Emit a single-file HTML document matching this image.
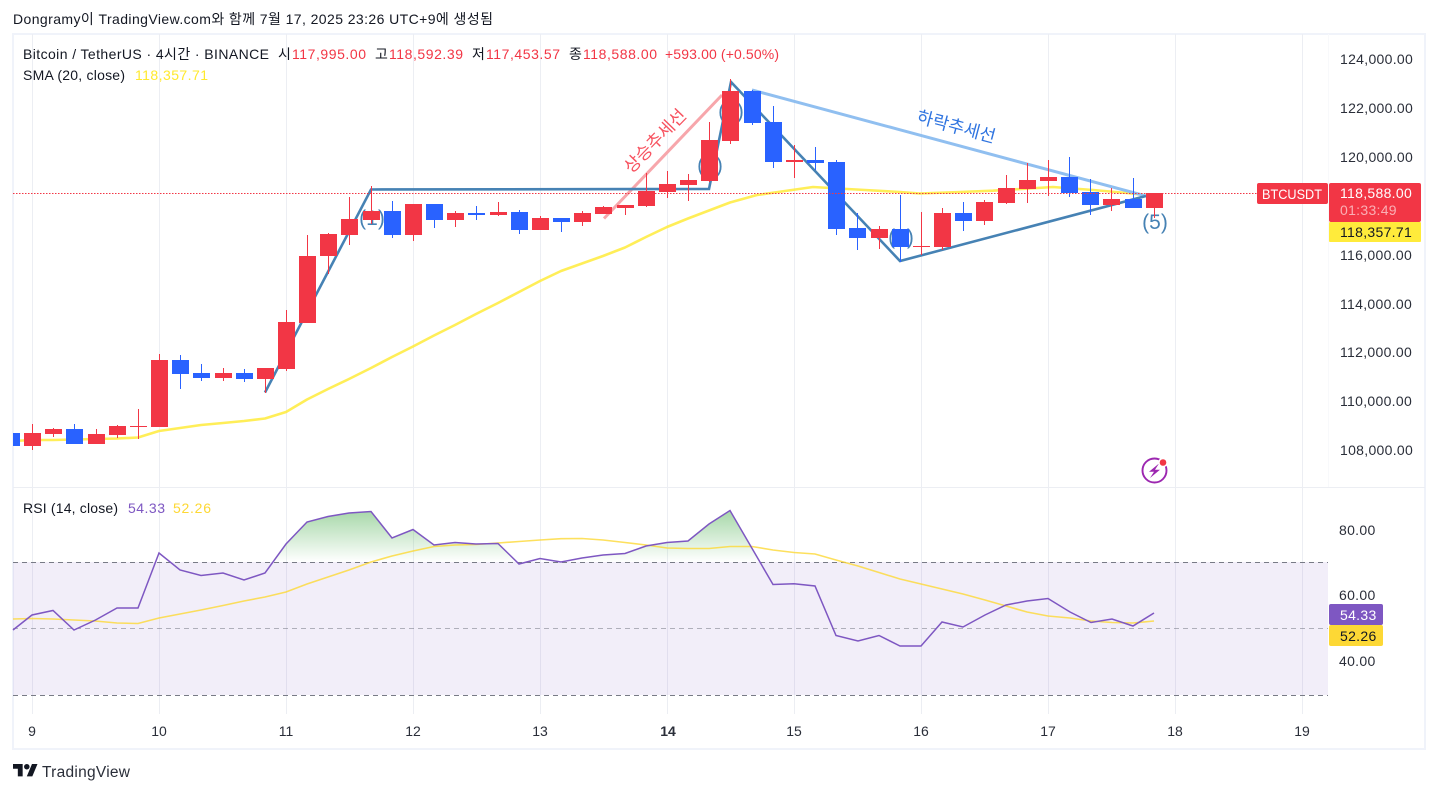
<!DOCTYPE html>
<html><head><meta charset="utf-8"><style>
html,body{margin:0;padding:0;background:#fff;width:1438px;height:793px;overflow:hidden}
svg{display:block}
text{font-family:"Liberation Sans","Noto Sans CJK KR",sans-serif;font-size:14px;fill:#131722}
.r{fill:#f23645}
.a{fill:#2a2e39;letter-spacing:.3px}
.t{text-anchor:middle;fill:#2a2e39}
.w{font-size:21px;fill:#4682b4;text-anchor:middle}
</style></head><body>
<svg width="1438" height="793" viewBox="0 0 1438 793" xmlns="http://www.w3.org/2000/svg">
<defs>
<linearGradient id="g" gradientUnits="userSpaceOnUse" x1="0" y1="510" x2="0" y2="562"><stop offset="0" stop-color="#4caf50" stop-opacity=".5"/><stop offset="1" stop-color="#4caf50" stop-opacity="0"/></linearGradient>
<clipPath id="c"><rect x="13" y="500" width="1315" height="62"/></clipPath>
<clipPath id="p"><rect x="13" y="34" width="1315" height="680"/></clipPath>
</defs>
<text x="13" y="24" textLength="480" style="font-size:14px">Dongramy이 TradingView.com와 함께 7월 17, 2025 23:26 UTC+9에 생성됨</text>
<rect x="13" y="34" width="1412" height="715" fill="#fff" stroke="#f0f3fa" stroke-width="2"/>
<path d="M32.5 34V714M159.5 34V714M286.5 34V714M413.5 34V714M540.5 34V714M667.5 34V714M794.5 34V714M921.5 34V714M1048.5 34V714M1175.5 34V714M1302.5 34V714" stroke="#eceef3" stroke-width="1"/>
<path d="M13 487.5H1425" stroke="#eceef3" stroke-width="1"/>
<path d="M1328.5 34V487" stroke="#f8f9fb" stroke-width="1"/>

<!-- RSI pane -->
<rect x="13" y="562" width="1315" height="133" fill="#7e57c2" fill-opacity=".1"/>
<path d="M13 562.5H1328M13 695.5H1328" stroke="#787b86" stroke-dasharray="5 4"/>
<path d="M13 628.5H1328" stroke="#787b86" stroke-opacity=".55" stroke-dasharray="5 4"/>
<polygon clip-path="url(#c)" fill="url(#g)" points="13,700 13,630 265,573 286,544 307,522 328,516.5 349,513 371,511.5 392,538 413,529.5 434,545 455,542.5 476,544 498,543.5 519,564 540,558.5 561,562 582,558 603,555 625,553.5 646,546 667,542.5 688,541 709,524 730,510.5 773,584.5 773,700"/>
<polyline fill="none" stroke="#fdd835" stroke-opacity=".8" stroke-width="1.6" points="13,619 32,618.5 53,619 74,620 95,621 117,623 138,623.5 159,618 180,614 201,610 223,605.5 244,601 265,597 286,592 307,584 328,577 349,570 371,562 392,556 413,551 434,546.5 455,545 476,544.5 498,543 519,541.5 540,540 561,538.7 582,538.5 603,540 625,542.5 646,545 667,548 688,548.5 709,548.5 730,546.5 752,546.5 773,550 794,552.5 815,554 836,560 858,566 879,572.5 900,579 921,584 942,589 963,594 985,600 1006,606 1027,612 1048,616 1070,618 1091,621 1112,622.5 1133,623 1154,621"/>
<polyline fill="none" stroke="#7e57c2" stroke-width="1.5" points="13,630 32,615 53,610.5 74,630 95.5,620 117,608 138,608 159,553 180,570 201,575.5 223,573 244,580 265,573 286,544 307,522 328,516.5 349,513 371,511.5 392,538 413,529.5 434,545 455,542.5 476,544 498,543.5 519,564 540,558.5 561,562 582,558 603,555 625,553.5 646,546 667,542.5 688,541 709,524 730,510.5 773,584.5 794,583.7 815,586 836,635.5 858,641 879,635.5 900,646 921,646 942,622 963,627 985,615 1006,605 1027,601 1048,598.5 1070,612 1091,622.5 1112,619 1133,626 1154,613"/>

<!-- SMA + drawings beneath candles -->
<g clip-path="url(#p)">
<polyline fill="none" stroke="#ffeb3b" stroke-opacity=".85" stroke-width="2.6" stroke-linejoin="round" points="13,441 32,440 53,440 74,439.5 95,439 117,438.5 138,437.5 159,431 180,428 201,425 223,423 244,421 265,418.5 286,412 307,399.5 328,389 349,379 371,368 392,357 413,346.5 434,335.5 455,325 476,314 498,303 519,292 540,281 561,271 582,263.5 603,256 625,247.5 646,237 667,227 688,218.5 709,210.5 730,202.5 757,195 785,191 813,187 830,188 865,190 900,192 920,193.5 960,192 993,190.7 1053,187 1093,190 1127,193 1145,195"/>
</g>
<path d="M604 218.5L722 95" stroke="#f7a6ab" stroke-width="3" fill="none"/>
<path d="M752 90L1146 196" stroke="#90bff0" stroke-width="3" fill="none"/>
<polyline fill="none" stroke="#4682b4" stroke-width="2.6" stroke-linejoin="miter" points="265,392.5 371,189.5 709,189 731,82 900,261 1146,196"/>
<text class="w" x="372" y="225">(1)</text>
<text class="w" x="710" y="172">(2)</text>
<text class="w" x="731" y="118">(3)</text>
<text class="w" x="901" y="244">(4)</text>
<text class="w" x="1155" y="229">(5)</text>
<text transform="translate(656 142) rotate(-46)" text-anchor="middle" dominant-baseline="middle" style="font-size:17.5px;fill:#f7525f">상승추세선</text>
<text transform="translate(956 128) rotate(15)" text-anchor="middle" dominant-baseline="middle" style="font-size:17.5px;fill:#2f74e0">하락추세선</text>

<!-- candles -->
<g shape-rendering="crispEdges">
<path fill="#f23645" d="M32 424h1v26h-1zM53 428h1v9h-1zM96 429h1v15h-1zM117 425h1v13h-1zM138 409h1v30h-1zM159 354h1v73h-1zM223 368h1v13h-1zM265 368h1v25h-1zM286 310h1v61h-1zM307 235h1v88h-1zM328 233h1v41h-1zM349 197h1v48h-1zM371 186h1v38h-1zM413 204h1v37h-1zM455 211h1v16h-1zM498 202h1v14h-1zM540 216h1v14h-1zM582 211h1v15h-1zM603 206h1v8h-1zM625 205h1v10h-1zM646 173h1v34h-1zM667 171h1v27h-1zM688 174h1v27h-1zM709 122h1v60h-1zM730 79h1v65h-1zM794 145h1v33h-1zM879 226h1v23h-1zM921 212h1v43h-1zM942 208h1v42h-1zM984 200h1v25h-1zM1006 175h1v29h-1zM1027 163h1v40h-1zM1048 160h1v36h-1zM1111 188h1v23h-1zM1154 193h1v25h-1z"/>
<path fill="#f23645" d="M24 433h17v13h-17zM45 429h17v5h-17zM88 434h17v10h-17zM109 426h17v9h-17zM130 426h17v1h-17zM151 360h17v67h-17zM215 373h17v5h-17zM257 368h17v11h-17zM278 322h17v47h-17zM299 256h17v67h-17zM320 234h17v22h-17zM341 219h17v16h-17zM363 211h17v9h-17zM405 204h17v31h-17zM447 213h17v7h-17zM490 212h17v3h-17zM532 218h17v12h-17zM574 213h17v9h-17zM595 207h17v7h-17zM617 205h17v3h-17zM638 191h17v15h-17zM659 184h17v8h-17zM680 180h17v5h-17zM701 140h17v41h-17zM722 91h17v50h-17zM786 160h17v2h-17zM871 229h17v9h-17zM913 246h17v1h-17zM934 213h17v34h-17zM976 202h17v19h-17zM998 188h17v15h-17zM1019 180h17v9h-17zM1040 177h17v4h-17zM1103 199h17v6h-17zM1146 193h17v15h-17z"/>
<path fill="#2962ff" d="M74 424h1v20h-1zM180 355h1v34h-1zM201 364h1v17h-1zM244 369h1v13h-1zM392 201h1v37h-1zM434 204h1v24h-1zM476 206h1v14h-1zM519 210h1v24h-1zM561 218h1v14h-1zM752 90h1v35h-1zM773 106h1v62h-1zM815 147h1v23h-1zM836 160h1v75h-1zM857 213h1v37h-1zM900 195h1v67h-1zM963 202h1v29h-1zM1069 157h1v40h-1zM1090 179h1v36h-1zM1133 178h1v30h-1z"/>
<path fill="#2962ff" d="M13 433h7v13h-7zM66 429h17v15h-17zM172 360h17v14h-17zM193 373h17v5h-17zM236 373h17v6h-17zM384 211h17v24h-17zM426 204h17v16h-17zM468 213h17v2h-17zM511 212h17v18h-17zM553 218h17v4h-17zM744 91h17v32h-17zM765 122h17v40h-17zM807 160h17v3h-17zM828 162h17v67h-17zM849 228h17v10h-17zM892 229h17v18h-17zM955 213h17v8h-17zM1061 177h17v16h-17zM1082 192h17v13h-17zM1125 199h17v9h-17z"/>
</g>
<path d="M13 193.5H1257" stroke="#f23645" stroke-width="1" stroke-dasharray="1.5 1.5"/>

<!-- legend -->
<text x="23" y="59" textLength="246">Bitcoin / TetherUS · 4시간 · BINANCE</text>
<text x="278" y="59">시</text><text class="r" x="292" y="59" textLength="74">117,995.00</text>
<text x="375" y="59">고</text><text class="r" x="389" y="59" textLength="74">118,592.39</text>
<text x="472" y="59">저</text><text class="r" x="486" y="59" textLength="74">117,453.57</text>
<text x="569" y="59">종</text><text class="r" x="583" y="59" textLength="74">118,588.00</text>
<text class="r" x="665" y="59" textLength="114">+593.00 (+0.50%)</text>
<text x="23" y="80" textLength="102">SMA (20, close)</text>
<text x="135" y="80" textLength="73" style="fill:#ffe92e">118,357.71</text>
<text x="23" y="513" textLength="95">RSI (14, close)</text>
<text x="128" y="513" textLength="37" style="fill:#7e57c2">54.33</text>
<text x="173" y="513" textLength="38" style="fill:#fdd835">52.26</text>

<!-- lightning -->
<circle cx="1154.5" cy="470.5" r="12" fill="#fff" stroke="#9c27b0" stroke-width="1.9"/>
<path d="M1159 463.5l-10 8.2h5l-4 6.3 10-8.2h-5z" fill="#9c27b0"/>
<circle cx="1163" cy="462.5" r="4.8" fill="#fff"/><circle cx="1163" cy="462.5" r="3.3" fill="#f23645"/>

<!-- price axis -->
<g class="ax">
<text class="a" x="1340" y="64">124,000.00</text>
<text class="a" x="1340" y="113">122,000.00</text>
<text class="a" x="1340" y="162">120,000.00</text>
<text class="a" x="1340" y="260">116,000.00</text>
<text class="a" x="1340" y="309">114,000.00</text>
<text class="a" x="1340" y="357">112,000.00</text>
<text class="a" x="1340" y="406">110,000.00</text>
<text class="a" x="1340" y="455">108,000.00</text>
<text class="a" x="1339" y="535">80.00</text>
<text class="a" x="1339" y="600">60.00</text>
<text class="a" x="1339" y="666">40.00</text>
</g>
<rect x="1257" y="183" width="71" height="21" rx="2" fill="#f23645"/>
<text x="1262" y="199" textLength="60" lengthAdjust="spacingAndGlyphs" style="fill:#fff">BTCUSDT</text>
<rect x="1329" y="183" width="92" height="39" rx="2" fill="#f23645"/>
<text x="1340" y="198" style="fill:#fff;letter-spacing:.3px">118,588.00</text>
<text x="1340" y="215" style="fill:#fff;fill-opacity:.6;letter-spacing:.3px">01:33:49</text>
<rect x="1329" y="222" width="92" height="20" rx="1" fill="#ffeb3b"/>
<text x="1340" y="237" style="letter-spacing:.3px">118,357.71</text>
<rect x="1329" y="604" width="54" height="21" rx="2" fill="#7e57c2"/>
<text x="1340" y="620" style="fill:#fff;letter-spacing:.3px">54.33</text>
<rect x="1329" y="625" width="54" height="21" rx="2" fill="#fdd835"/>
<text x="1340" y="641" style="letter-spacing:.3px">52.26</text>

<!-- time axis -->
<text class="t" x="32" y="736">9</text>
<text class="t" x="159" y="736">10</text>
<text class="t" x="286" y="736">11</text>
<text class="t" x="413" y="736">12</text>
<text class="t" x="540" y="736">13</text>
<text class="t" x="668" y="736" style="font-weight:bold">14</text>
<text class="t" x="794" y="736">15</text>
<text class="t" x="921" y="736">16</text>
<text class="t" x="1048" y="736">17</text>
<text class="t" x="1175" y="736">18</text>
<text class="t" x="1302" y="736">19</text>

<!-- logo -->
<g transform="translate(13 761.2) scale(.69)"><path fill="#131722" d="M14 22H7V11H0V4h14v18zM28 22h-8l7.5-18h8L28 22z"/><circle fill="#131722" cx="20" cy="8" r="4"/></g>
<text x="42" y="777" textLength="88" style="font-size:15.5px;fill:#2a2e39">TradingView</text>
</svg>
</body></html>
